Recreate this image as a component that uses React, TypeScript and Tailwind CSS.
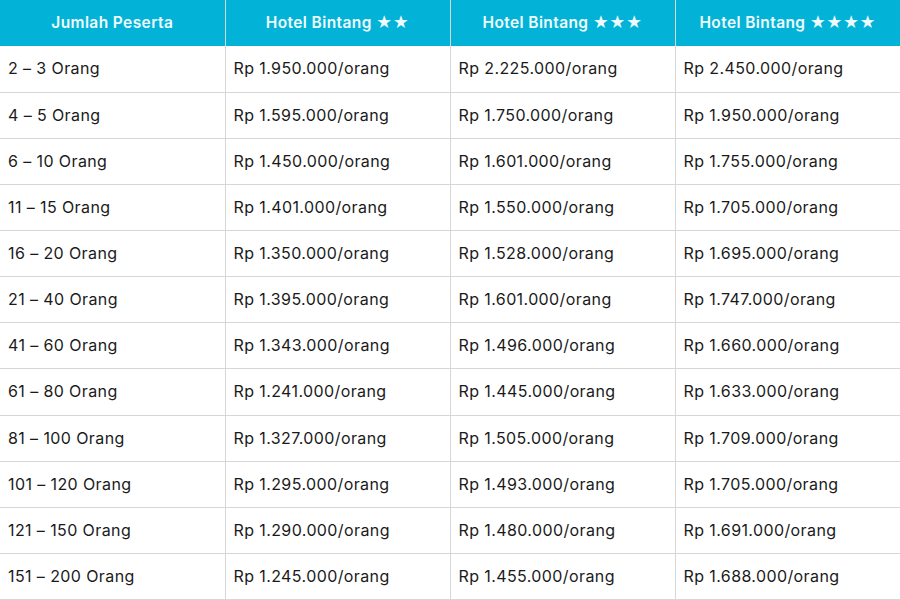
const headers = ['Jumlah Peserta', 'Hotel Bintang ★★', 'Hotel Bintang ★★★', 'Hotel Bintang ★★★★']

const rows: string[][] = [
  ['2 – 3 Orang', '1.950.000', '2.225.000', '2.450.000'],
  ['4 – 5 Orang', '1.595.000', '1.750.000', '1.950.000'],
  ['6 – 10 Orang', '1.450.000', '1.601.000', '1.755.000'],
  ['11 – 15 Orang', '1.401.000', '1.550.000', '1.705.000'],
  ['16 – 20 Orang', '1.350.000', '1.528.000', '1.695.000'],
  ['21 – 40 Orang', '1.395.000', '1.601.000', '1.747.000'],
  ['41 – 60 Orang', '1.343.000', '1.496.000', '1.660.000'],
  ['61 – 80 Orang', '1.241.000', '1.445.000', '1.633.000'],
  ['81 – 100 Orang', '1.327.000', '1.505.000', '1.709.000'],
  ['101 – 120 Orang', '1.295.000', '1.493.000', '1.705.000'],
  ['121 – 150 Orang', '1.290.000', '1.480.000', '1.691.000'],
  ['151 – 200 Orang', '1.245.000', '1.455.000', '1.688.000'],
]

export default function App() {
  return (
    <div className="h-[600px] w-[900px] bg-white" style={{ fontFamily: 'Inter, "Noto Sans", sans-serif' }}>
      <table className="h-full w-full table-fixed border-collapse text-[16px] tracking-[0.4px] text-[#1a1a1a]">
        <thead>
          <tr className="bg-[#03b3d7]">
            {headers.map((h, i) => (
              <th
                key={h}
                className={`h-[46px] pb-[1px] text-center text-[15.5px] font-semibold tracking-[0.4px] text-[#eefbfe] ${i > 0 ? 'border-l border-[#d6d6d6]' : ''}`}
              >
                {h}
              </th>
            ))}
          </tr>
        </thead>
        <tbody>
          {rows.map((r) => (
            <tr key={r[0]} className="border-b border-[#d6d6d6]">
              {r.map((c, i) => (
                <td
                  key={i}
                  className={`h-[46px] px-2 pb-[1px] align-middle ${i > 0 ? 'border-l border-[#d6d6d6]' : ''}`}
                >
                  {i === 0 ? c : `Rp ${c}/orang`}
                </td>
              ))}
            </tr>
          ))}
        </tbody>
      </table>
    </div>
  )
}
